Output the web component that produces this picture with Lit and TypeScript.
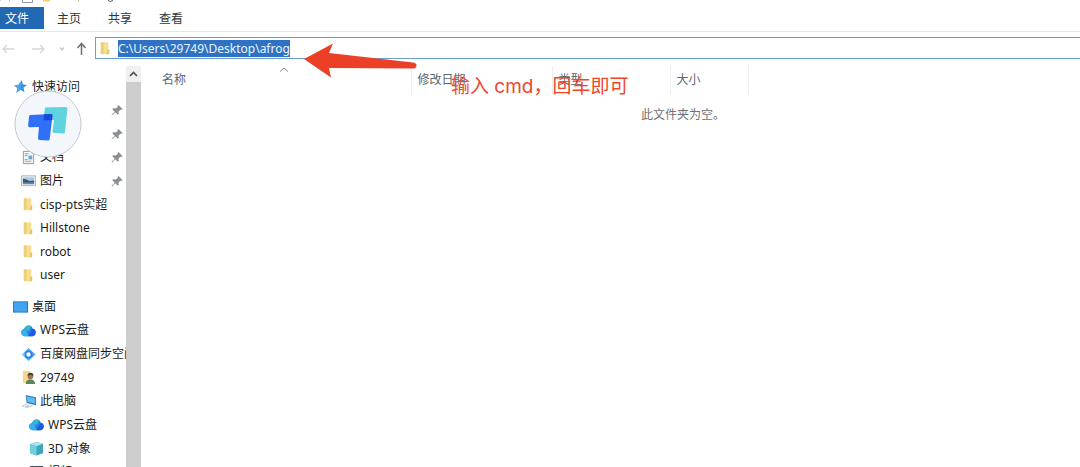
import { LitElement, html, css, svg, nothing } from "lit";
import { customElement, query } from "lit/decorators.js";

interface Place {
  label: string;
  icon: string;
  level: number;
  pinned?: boolean;
}

const QUICK: Place[] = [
  { label: "快速访问", icon: "star", level: 0 },
  { label: "桌面", icon: "desktop", level: 1, pinned: true },
  { label: "下载", icon: "doc", level: 1, pinned: true },
  { label: "文档", icon: "doc", level: 1, pinned: true },
  { label: "图片", icon: "picture", level: 1, pinned: true },
  { label: "cisp-pts实超", icon: "folder", level: 1 },
  { label: "Hillstone", icon: "folder", level: 1 },
  { label: "robot", icon: "folder", level: 1 },
  { label: "user", icon: "folder", level: 1 },
];

const DESKTOP: Place[] = [
  { label: "桌面", icon: "desktop", level: 0 },
  { label: "WPS云盘", icon: "cloud", level: 1 },
  { label: "百度网盘同步空间", icon: "sync", level: 1 },
  { label: "29749", icon: "person", level: 1 },
  { label: "此电脑", icon: "computer", level: 1 },
  { label: "WPS云盘", icon: "cloud", level: 2 },
  { label: "3D 对象", icon: "cube", level: 2 },
  { label: "视频", icon: "video", level: 2 },
];

const ICONS: Record<string, unknown> = {
  star: svg`<path d="M9.4 1.2 10.6 5.8 15 6.4 11.2 9.2 12.3 14 8 11.5 3.6 14.6 4.8 9.6 1.2 7 6 6.2Z" fill="#3a8fd3"/><path d="M9.4 1.2 8 11.5 3.6 14.6 4.8 9.6 1.2 7 6 6.2Z" fill="#4fa6e3"/>`,
  folder: svg`<path d="M3 1.500h8v12.500H3z" fill="#f7df92"/><path d="M3 1.500h3v12.500H3z" fill="#eccf77"/><path d="M10 9h2v5H9z" fill="#e6c66b"/>`,
  desktop: svg`<path d="M0 2.500h16v12H0z" fill="#1c79c4"/><path d="M1 3.500h14v10H1z" fill="#42a3f3"/>`,
  doc: svg`<path d="M2.500 1.500h8l3 3v10h-11z" fill="#f4f6f7" stroke="#8c979c"/><path d="M4 4h4M4 6h3M4 10h3M4 12h7" stroke="#8ba0a9"/><path d="M8 6h4v4H8z" fill="#62a9cf"/>`,
  picture: svg`<path d="M.5 3h15v10.500H.5z" fill="#eef4f8" stroke="#a9b2b8"/><path d="M2 4.500h12v4H2z" fill="#a9cbea"/><path d="M2 6l4 1 3 1.500 5-.5V11H2z" fill="#3d566d"/><path d="M2 10h12v2H2z" fill="#6488a8"/>`,
  cloud: svg`<path d="M3.800 14A3.800 3.800 0 0 1 3.200 6.500 5 5 0 0 1 12.600 6 4.100 4.100 0 0 1 12.300 14Z" fill="#247de9"/><path d="M3.800 14A3.800 3.800 0 0 1 3.200 6.500Q7 7 7.500 14Z" fill="#39b0ee"/><path d="M3.400 6a5 5 0 0 1 8-2.500L8 9Z" fill="#3ab4cd"/><path d="M8 14l4.600-8a4.100 4.100 0 0 1-.3 8Z" fill="#1b5be0"/>`,
  sync: svg`<path d="M8 1 12 5H4Z" fill="#43b4f4"/><path d="M8 15 12 11H4Z" fill="#43b4f4"/><path d="M.5 8 5 4 6 8 5 12Z" fill="#8acbf7"/><path d="M15.500 8 11 4 10 8 11 12Z" fill="#5a9bee"/><circle cx="8" cy="8" r="3.300" fill="#fff" stroke="#2f83e8" stroke-width="2"/>`,
  person: svg`<path d="M2 1h8v13H2z" fill="#f3d98a"/><circle cx="10" cy="7" r="3" fill="#a57553"/><path d="M7 6q0-3 3-3 4 0 3 4l-2-2z" fill="#4b3d34"/><path d="M5 15q0-5 5-5t5 5z" fill="#568763"/>`,
  computer: svg`<path d="M5 1l11 2.500v8.500L6 9.500z" fill="#2980c5"/><path d="M6 2.500l9 2v5.500L7 8.500z" fill="#66b9ed"/><path d="M0 13l6-3 7 2.500-6 2.500z" fill="#c3c9cd"/><path d="M3 13l4-1.500 3 1" stroke="#fff" fill="none"/>`,
  cube: svg`<path d="M8 1l7 2v10L8 15.500 1 13V3.500Z" fill="#3fa5bd"/><path d="M8 1l7 2L8 5.500 1 3.500Z" fill="#a7e4ed"/><path d="M1 3.500 8 5.500v10L1 13z" fill="#6fcfdd"/>`,
  video: svg`<path d="M1 1h14v13H1z" fill="#4a4f5c"/><path d="M4 2h8v11H4z" fill="#7f93c8"/><path d="M2.500 2v11M13.500 2v11" stroke="#dfe3ea" stroke-dasharray="1 1"/>`,
};

const icon = (name: string) =>
  html`<svg class="icon" viewBox="0 0 16 16" aria-hidden="true">${ICONS[name]}</svg>`;

const pin = html`<svg class="pin" viewBox="0 0 12 12" aria-hidden="true">
  <path d="M7.500 1l4 4-1 1-1-.3L7.500 7.500 7.700 10l-1 .7L4.300 8.300 1 11.500.5 11 3.700 7.700 1.300 5.300l.7-1 2.500.2L6.800 3 6.500 2z" fill="currentColor"/>
</svg>`;

@customElement("nav-tree")
class NavTree extends LitElement {
  static styles = css`
    :host { display: block; overflow: hidden; }
    .group { list-style: none; margin: 0 0 8px; padding: 0; display: grid; grid-auto-rows: 1fr; }
    .quick { height: 212px; }
    .desktop { height: 189px; }
    .row { display: flex; align-items: center; min-height: 0; }
    .level0 { padding-left: 13px; }
    .level1 { padding-left: 21px; }
    .level2 { padding-left: 29px; }
    .link { display: flex; align-items: center; gap: 4px; flex: 1; min-width: 0; color: #1b1b1b; text-decoration: none; white-space: nowrap; overflow: hidden; line-height: 20px; }
    .icon { width: 15px; height: 15px; flex: none; }
    .pin { width: 12px; height: 12px; margin-right: 3px; flex: none; color: #8a8f94; }
  `;

  private group(name: string, places: Place[]) {
    return html`<ul class="group ${name}">
      ${places.map(
        (p) => html`<li class="row level${p.level}">
          <a class="link" href="#">${icon(p.icon)}<span>${p.label}</span></a>
          ${p.pinned ? pin : nothing}
        </li>`
      )}
    </ul>`;
  }

  render() {
    return html`${this.group("quick", QUICK)}${this.group("desktop", DESKTOP)}`;
  }
}

@customElement("app-root")
class AppRoot extends LitElement {
  static styles = css`
    :host { display: flex; flex-direction: column; height: 100vh; overflow: hidden; position: relative; background: #fff; color: #333; font: 12px/20px "Noto Sans", "Noto Sans CJK SC", sans-serif; }
    button, input { font: inherit; color: inherit; border: 0; background: none; padding: 0; margin: 0; }
    .title { height: 7px; flex: none; overflow: hidden; display: flex; align-items: flex-start; }
    .title svg { width: 130px; height: 7px; flex: none; }
    .tabs { display: flex; flex: none; gap: 27px; height: 24px; border-bottom: 1px solid #e3e5e7; }
    .tab { height: 22px; line-height: 24px; }
    .file { width: 44px; background: #2269b3; color: #fff; padding: 0 10px 0 0; margin-right: -14px; }
    .bar { display: flex; flex: none; align-items: center; height: 32px; }
    .nav { display: flex; align-items: center; width: 95px; }
    .navbtn { display: flex; }
    .navbtn svg { height: 16px; }
    .wide { width: 30px; }
    .slim { width: 16px; }
    .address { display: flex; flex: 1; align-items: center; gap: 5px; height: 22px; box-sizing: border-box; border: 1px solid #6a9fcb; border-right: 0; padding-left: 2px; }
    .address svg { width: 15px; height: 15px; flex: none; }
    .path { flex: 1; outline: 0; height: 17px; line-height: 17px; caret-color: transparent; }
    .path::selection { background: #2f72c4; color: #e8f5ff; }
    .main { display: flex; flex: 1; min-height: 0; }
    nav-tree { width: 126px; flex: none; padding-top: 11px; box-sizing: border-box; }
    .scroll { width: 15px; flex: none; background: linear-gradient(#fff 2px, #cdcdcd 2px); padding-top: 2px; box-sizing: border-box; }
    .up { display: flex; align-items: center; justify-content: center; width: 15px; height: 16px; background: #f0f0f0; }
    .up svg { width: 9px; height: 6px; }
    .files { flex: 1; min-width: 0; padding-top: 2px; }
    .table { border-collapse: collapse; table-layout: fixed; width: 608px; color: #5d6670; }
    .table th { position: relative; font-weight: 400; text-align: left; height: 28px; padding: 0 0 0 6px; border-right: 1px solid #eee; box-sizing: border-box; }
    .table .name { width: 270px; padding-left: 21px; }
    .date { width: 141px; }
    .type { width: 118px; }
    .sort { position: absolute; top: 1px; left: 138px; width: 10px; height: 5px; }
    .empty { margin: 11px 0 0; padding-left: 145px; text-align: center; color: #707070; }
    .note { position: absolute; left: 451px; top: 74px; margin: 0; font: 19px/26px Inter, "Noto Sans CJK SC", sans-serif; color: #f0452b; white-space: nowrap; }
    .arrow { position: absolute; left: 304px; top: 42px; width: 113px; height: 36px; }
    .logo { position: absolute; left: 14px; top: 90px; width: 68px; height: 68px; padding: 0; }
    .logo svg { display: block; width: 68px; height: 68px; }
  `;

  @query(".path") private path!: HTMLInputElement;

  firstUpdated() {
    this.path.focus();
    this.path.select();
  }

  render() {
    return html`
      <header class="title">
        <svg viewBox="0 0 130 7" aria-hidden="true">
          <path d="M0 0h1M9.500 0v1M78.500 0v1" stroke="#aaa"/>
          <path d="M22.500 0v2.500h10V0" fill="none" stroke="#8d9aa3"/>
          <path d="M43 0h7v1.500h-7z" fill="#f2cf6b"/>
          <path d="M108 .5q2 2 5 0" fill="none" stroke="#555"/>
        </svg>
      </header>
      <nav class="tabs" aria-label="功能区">
        <button class="tab file">文件</button>
        <button class="tab">主页</button>
        <button class="tab">共享</button>
        <button class="tab">查看</button>
      </nav>
      <div class="bar">
        <div class="nav">
          <button class="navbtn" aria-label="后退"><svg class="wide" viewBox="0 0 30 16"><path d="M14 9H3M7 5 3 9l4 4" fill="none" stroke="#d6d6d6" stroke-width="1.300"/></svg></button>
          <button class="navbtn" aria-label="前进"><svg class="wide" viewBox="0 0 30 16"><path d="M2 9h12M10 5l4 4-4 4" fill="none" stroke="#d6d6d6" stroke-width="1.300"/></svg></button>
          <button class="navbtn" aria-label="最近"><svg class="slim" viewBox="0 0 16 16"><path d="M0 7.500l2 2.500 2-2.500" fill="none" stroke="#c4c4c4" stroke-width="1.300"/></svg></button>
          <button class="navbtn" aria-label="上移"><svg class="slim" viewBox="0 0 16 16"><path d="M5.500 15V4M1.500 8l4-4.500 4 4.500" fill="none" stroke="#6f6f6f" stroke-width="1.500"/></svg></button>
        </div>
        <div class="address">
          <svg viewBox="0 0 16 16" aria-hidden="true">${ICONS.folder}</svg>
          <input class="path" type="text" aria-label="地址" spellcheck="false" .value=${"C:\\Users\\29749\\Desktop\\afrog"} />
        </div>
      </div>
      <main class="main">
        <nav-tree></nav-tree>
        <div class="scroll">
          <button class="up" aria-label="向上滚动"><svg viewBox="0 0 9 6"><path d="M1 5l3.500-3.500L8 5" fill="none" stroke="#505050" stroke-width="1.700"/></svg></button>
        </div>
        <section class="files">
          <table class="table">
            <thead>
              <tr>
                <th class="name">名称<svg class="sort" viewBox="0 0 10 5" aria-hidden="true"><path d="M1 4.500l4-3.500 4 3.500" fill="none" stroke="#8a8a8a"/></svg></th>
                <th class="date">修改日期</th>
                <th class="type">类型</th>
                <th>大小</th>
              </tr>
            </thead>
          </table>
          <p class="empty">此文件夹为空。</p>
        </section>
      </main>
      <svg class="arrow" viewBox="0 0 113 36" aria-hidden="true">
        <path d="M0 17 29 1.500 25 11 109 20.500Q113 21 112.500 24 112 26.500 109 26.500L25 26 27 35.500Z" fill="#eb4026"/>
      </svg>
      <p class="note">输入 cmd，回车即可</p>
      <button class="logo" aria-label="助手">
        <svg viewBox="0 0 68 68">
          <circle cx="34" cy="34" r="33" fill="#f3f7fb" stroke="#c3c9cf"/>
          <path d="M31 17.500 52 17q1.500 0 1.400 1.500L51 42q-.2 1.700-1.800 1.600L40 43q-1.600-.2-1.400-1.800L40 30l-10.500.5Z" fill="#60d3df"/>
          <path d="M16.500 25 37 24q1.700 0 1.500 1.600L35.700 49q-.2 1.600-1.800 1.500L25.500 50q-1.600-.2-1.500-1.700L25 37l-9.500.3q-1.600 0-1.400-1.700l1-9Q15.200 25 16.500 25Z" fill="#2f70f6"/>
          <path d="M30 24.300 37 24q1.700 0 1.500 1.600L38 30l-8.500.5Z" fill="#1b49dc"/>
        </svg>
      </button>
    `;
  }
}
